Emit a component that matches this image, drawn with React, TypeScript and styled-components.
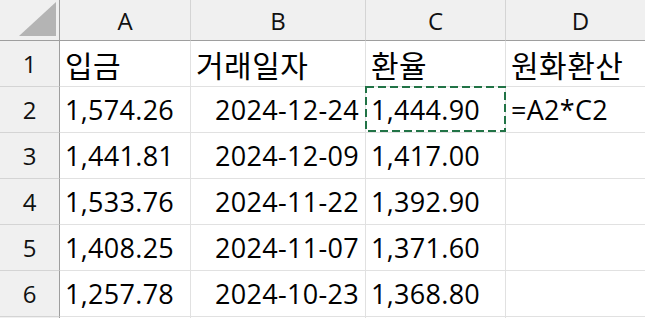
import React from 'react';
import styled, { createGlobalStyle } from 'styled-components';

const GlobalStyle = createGlobalStyle`
  html, body {
    margin:0;
    padding:0;
    background:#fff;
  }
`

const Sheet = styled.div`
  display:grid;
  grid-template-columns:60px 131px 175px 140px 150px;
  grid-auto-rows:46px;
  grid-template-rows:41px;
  width:645px;
  height:318px;
  overflow:hidden;
  font-family:"Open Sans", "Noto Sans CJK KR", sans-serif;
  color:#000;
`

const Corner = styled.div`
  position:relative;
  background:#f0f0f0;
  border-right:1px solid #9e9e9e;
  border-bottom:1px solid #9e9e9e;
  box-sizing:border-box;
  svg {
    position:absolute;
    left:0;
    top:0;
  }
`

const ColHead = styled.div`
  display:flex;
  align-items:center;
  justify-content:center;
  background:#f0f0f0;
  border-right:1px solid #d4d4d4;
  border-bottom:1px solid #9e9e9e;
  box-sizing:border-box;
  font-size:24px;
  color:#111;
`

const RowHead = styled.div`
  display:flex;
  align-items:center;
  justify-content:center;
  background:#f0f0f0;
  border-right:1px solid #9e9e9e;
  border-bottom:1px solid #d4d4d4;
  box-sizing:border-box;
  font-size:24px;
  color:#111;
`

const Cell = styled.div<{ $align?: 'left' | 'right'; $hangul?: boolean }>`
  position:relative;
  display:flex;
  align-items:center;
  justify-content:${({ $align }) => ($align === 'right' ? 'flex-end' : 'flex-start')};
  padding:0 6px 0 5px;
  border-right:1px solid #e1e1e1;
  border-bottom:1px solid #e1e1e1;
  box-sizing:border-box;
  font-family:${({ $hangul }) => ($hangul ? '"Noto Sans CJK KR", sans-serif' : 'inherit')};
  font-size:${({ $hangul }) => ($hangul ? '30px' : '27px')};
  letter-spacing:${({ $hangul }) => ($hangul ? '0.5px' : '0.3px')};
  white-space:nowrap;
  overflow:visible;
`

const Marquee = styled.svg`
  position:absolute;
  left:-1px;
  top:-1px;
  pointer-events:none;
`

const rows = [
  ['입금', '거래일자', '환율', '원화환산'],
  ['1,574.26', '2024-12-24', '1,444.90', '=A2*C2'],
  ['1,441.81', '2024-12-09', '1,417.00', ''],
  ['1,533.76', '2024-11-22', '1,392.90', ''],
  ['1,408.25', '2024-11-07', '1,371.60', ''],
  ['1,257.78', '2024-10-23', '1,368.80', ''],
  ['', '', '', ''],
];

const App = () => {
  return (
    <>
      <GlobalStyle />
      <Sheet>
        <Corner>
          <svg width="59" height="40">
            <polygon points="56,2 56,36 19,36" fill="#b4b4b4" />
          </svg>
        </Corner>
        {['A', 'B', 'C', 'D'].map((c) => (
          <ColHead key={c}>{c}</ColHead>
        ))}
        {rows.map((r, i) => (
          <React.Fragment key={i}>
            <RowHead>{i < 6 ? i + 1 : ''}</RowHead>
            {r.map((v, j) => (
              <Cell key={j} $align={j === 1 && i > 0 ? 'right' : 'left'} $hangul={i === 0}>
                {v}
                {i === 1 && j === 2 && (
                  <Marquee width="142" height="47">
                    <rect x="1" y="1" width="139" height="44" fill="none" stroke="#217346" strokeWidth="2" strokeDasharray="8 4" />
                  </Marquee>
                )}
              </Cell>
            ))}
          </React.Fragment>
        ))}
      </Sheet>
    </>
  );
};

export default App;
